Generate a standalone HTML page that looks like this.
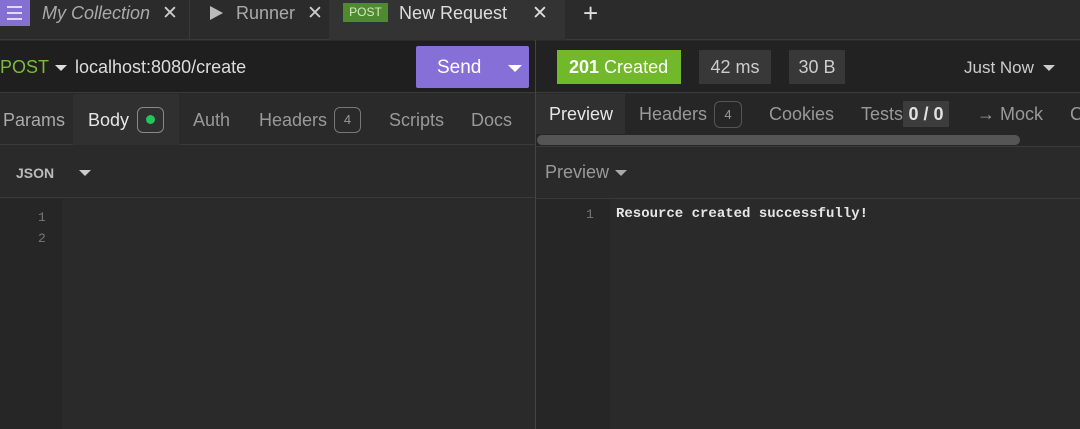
<!DOCTYPE html><html><head><style>
*{margin:0;padding:0;box-sizing:border-box}
body{width:1080px;height:429px;background:#2a2a2a;font-family:"Liberation Sans",sans-serif;color:#bbb;position:relative;overflow:hidden;font-size:18px}
.a{position:absolute;white-space:nowrap}
</style></head><body>
<div class="a" style="left:0;top:0;width:1080px;height:40px;background:#2b2b2b;border-bottom:1px solid #3a3a3a"></div>
<div class="a" style="left:0;top:0;width:30px;height:26px;background:#8370d0"></div>
<div class="a" style="left:7px;top:6px;width:15px;height:2px;background:#e0d8ff;box-shadow:0 6px 0 #e0d8ff,0 12px 0 #e0d8ff"></div>
<div class="a" style="left:42px;top:3px;font-style:italic;color:#aaa">My Collection</div>
<div class="a" style="left:162px;top:2px;color:#ccc;font-size:19px">✕</div>
<div class="a" style="left:189px;top:0;width:1px;height:40px;background:#3a3a3a"></div>
<div class="a" style="left:210px;top:6px;width:0;height:0;border-left:13px solid #bbb;border-top:7px solid transparent;border-bottom:7px solid transparent"></div>
<div class="a" style="left:236px;top:3px;color:#aaa">Runner</div>
<div class="a" style="left:307px;top:2px;color:#ccc;font-size:19px">✕</div>
<div class="a" style="left:329px;top:0;width:236px;height:40px;background:#333"></div>
<div class="a" style="left:343px;top:3px;width:45px;height:19px;background:#4e8a2e;color:#d7e8c8;font-size:12px;text-align:center;line-height:19px">POST</div>
<div class="a" style="left:399px;top:3px;color:#ddd">New Request</div>
<div class="a" style="left:532px;top:2px;color:#ddd;font-size:19px">✕</div>
<div class="a" style="left:583px;top:-2px;color:#ddd;font-size:26px">+</div>
<div class="a" style="left:0;top:41px;width:535px;height:52px;background:#1f1f1f;border-bottom:1px solid #3a3a3a"></div>
<div class="a" style="left:0;top:57px;color:#7cbb3c">POST</div>
<div class="a" style="left:55px;top:65px;border-top:6px solid #ddd;border-left:6px solid transparent;border-right:6px solid transparent"></div>
<div class="a" style="left:75px;top:57px;color:#ddd">localhost:8080/create</div>
<div class="a" style="left:416px;top:46px;width:113px;height:42px;background:#8670d8;border-radius:2px"></div>
<div class="a" style="left:437px;top:57px;color:#fff;font-size:19px">Send</div>
<div class="a" style="left:508px;top:65px;border-top:7px solid #fff;border-left:7px solid transparent;border-right:7px solid transparent"></div>
<div class="a" style="left:536px;top:41px;width:544px;height:52px;background:#222;border-bottom:1px solid #3a3a3a"></div>
<div class="a" style="left:557px;top:50px;width:124px;height:34px;background:#71b82a;color:#fff;line-height:34px;padding-left:12px"><b>201</b> Created</div>
<div class="a" style="left:699px;top:50px;width:72px;height:34px;background:#383838;color:#ccc;line-height:34px;text-align:center">42 ms</div>
<div class="a" style="left:789px;top:50px;width:56px;height:34px;background:#383838;color:#ccc;line-height:34px;text-align:center">30 B</div>
<div class="a" style="left:964px;top:58px;color:#ccc;font-size:17px">Just Now</div>
<div class="a" style="left:1043px;top:65px;border-top:6px solid #ccc;border-left:6px solid transparent;border-right:6px solid transparent"></div>
<div class="a" style="left:0;top:94px;width:535px;height:51px;border-bottom:1px solid #3a3a3a"></div>
<div class="a" style="left:73px;top:94px;width:106px;height:51px;background:#303030"></div>
<div class="a" style="left:3px;top:110px;color:#aaa">Params</div>
<div class="a" style="left:88px;top:110px;color:#e6e6e6">Body</div>
<div class="a" style="left:137px;top:107px;width:27px;height:26px;border:1px solid #888;border-radius:6px"></div>
<div class="a" style="left:146px;top:115px;width:9px;height:9px;border-radius:50%;background:#22c55e"></div>
<div class="a" style="left:193px;top:110px;color:#999">Auth</div>
<div class="a" style="left:259px;top:110px;color:#999">Headers</div>
<div class="a" style="left:334px;top:107px;width:27px;height:26px;border:1px solid #777;border-radius:6px;font-size:13px;text-align:center;line-height:24px;color:#999">4</div>
<div class="a" style="left:389px;top:110px;color:#999">Scripts</div>
<div class="a" style="left:471px;top:110px;color:#999">Docs</div>
<div class="a" style="left:536px;top:94px;width:544px;height:40px;background:#262626"></div>
<div class="a" style="left:536px;top:94px;width:89px;height:40px;background:#303030"></div>
<div class="a" style="left:549px;top:104px;color:#e6e6e6">Preview</div>
<div class="a" style="left:639px;top:104px;color:#999">Headers</div>
<div class="a" style="left:714px;top:101px;width:28px;height:27px;border:1px solid #555;border-radius:6px;font-size:13px;text-align:center;line-height:25px;color:#999">4</div>
<div class="a" style="left:769px;top:104px;color:#999">Cookies</div>
<div class="a" style="left:861px;top:104px;color:#999">Tests</div>
<div class="a" style="left:903px;top:101px;width:46px;height:26px;background:#3c3c3c;color:#e0e0e0;text-align:center;line-height:26px;font-weight:bold">0 / 0</div>
<div class="a" style="left:977px;top:104px;color:#999">→ Mock</div>
<div class="a" style="left:1070px;top:104px;color:#999">C</div>
<div class="a" style="left:536px;top:134px;width:544px;height:12px;background:#262626"></div>
<div class="a" style="left:537px;top:135px;width:483px;height:10px;background:#555;border-radius:5px"></div>
<div class="a" style="left:536px;top:146px;width:544px;height:1px;background:#3a3a3a"></div>
<div class="a" style="left:0;top:146px;width:535px;height:52px;border-bottom:1px solid #3a3a3a"></div>
<div class="a" style="left:16px;top:165px;color:#bbb;font-size:14px;font-weight:bold">JSON</div>
<div class="a" style="left:79px;top:170px;border-top:6px solid #ccc;border-left:6px solid transparent;border-right:6px solid transparent"></div>
<div class="a" style="left:545px;top:162px;color:#999">Preview</div>
<div class="a" style="left:615px;top:170px;border-top:6px solid #aaa;border-left:6px solid transparent;border-right:6px solid transparent"></div>
<div class="a" style="left:536px;top:198px;width:544px;height:1px;background:#3a3a3a"></div>
<div class="a" style="left:0;top:199px;width:62px;height:230px;background:#262626"></div>
<div class="a" style="left:38px;top:207px;font-family:'Liberation Mono',monospace;font-size:13px;color:#777;line-height:21px">1<br>2</div>
<div class="a" style="left:535px;top:40px;width:1px;height:389px;background:#444"></div>
<div class="a" style="left:536px;top:199px;width:74px;height:230px;background:#262626"></div>
<div class="a" style="left:586px;top:207px;font-family:'Liberation Mono',monospace;font-size:13px;color:#777">1</div>
<div class="a" style="left:616px;top:206px;font-family:'Liberation Mono',monospace;font-size:14px;color:#e6e6e6;font-weight:bold">Resource created successfully!</div>
</body></html>
